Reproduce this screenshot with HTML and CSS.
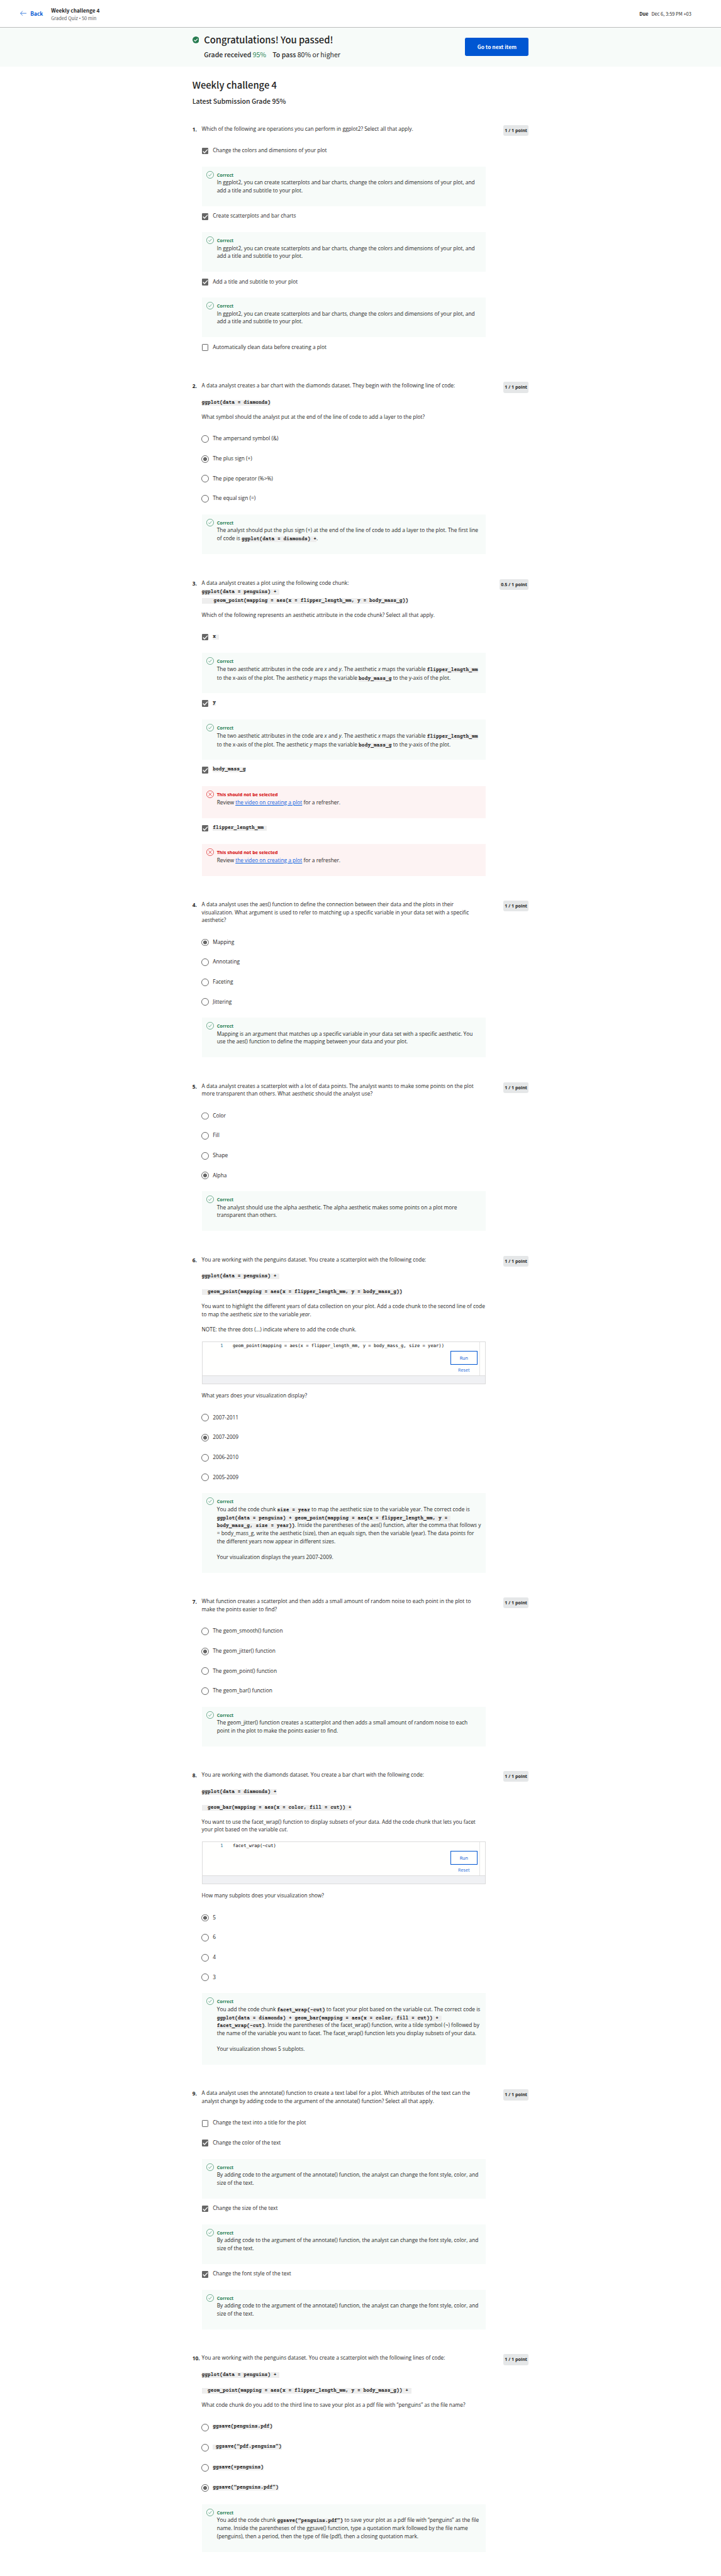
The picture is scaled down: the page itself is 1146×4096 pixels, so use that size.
FILE: index.html
```html
<!DOCTYPE html>
<html lang="en">
<head>
<meta charset="utf-8">
<title>Weekly challenge 4</title>
<link rel="stylesheet" href="styles.css">
</head>
<body>
<svg class="sprite" aria-hidden="true">
  <symbol id="ok" viewBox="0 0 20 20"><circle cx="10" cy="10" r="9.4" fill="none" stroke="currentColor"/><path d="M5.8 10.4l2.7 2.8 5.5-6.6" fill="none" stroke="currentColor"/></symbol>
  <symbol id="bad" viewBox="0 0 20 20"><circle cx="10" cy="10" r="9.4" fill="none" stroke="currentColor"/><path d="M5.8 5.6l8.4 8.8M14.2 5.6l-8.4 8.8" fill="none" stroke="currentColor"/></symbol>
  <symbol id="tick" viewBox="0 0 18 18"><path d="M2.8 9.2l4 4.2 8.4-9" fill="none" stroke="#fff" stroke-width="2.2"/></symbol>
</svg>

<header class="topbar">
  <a class="back"><svg class="arrow" viewBox="0 0 17 14"><path d="M17 7H1M6.5 1L1 7l5.5 6" fill="none" stroke="currentColor" stroke-width="1.2"/></svg>Back</a>
  <div class="crumb"><div class="crumb-title">Weekly challenge 4</div><div class="crumb-sub">Graded Quiz <span class="dot">•</span> 50 min</div></div>
  <div class="due"><b>Due</b><span>Dec 6, 3:59 PM +03</span></div>
</header>

<section class="banner">
  <div class="banner-inner">
    <svg class="passed" viewBox="0 0 18 18"><circle cx="9" cy="9" r="9" fill="#267b50"/><path d="M4.2 9.2l3.2 3.1 6.3-6.2" fill="none" stroke="#fff" stroke-width="2"/></svg>
    <div class="result">
      <h1>Congratulations! You passed!</h1>
      <div class="grades"><span><b>Grade received</b> <span class="green">95%</span></span><span><b>To pass</b> 80% or higher</span></div>
    </div>
    <a class="next">Go to next item</a>
  </div>
</section>

<main>
<h2>Weekly challenge 4</h2>
<h3>Latest Submission Grade 95%</h3>

<section class="q">
  <div class="num">1.</div>
  <div class="body">
    <div class="prompt"><p>Which of the following are operations you can perform in ggplot2? Select all that apply.</p></div>
    <div class="opt"><i class="box on"><svg><use href="#tick"/></svg></i>Change the colors and dimensions of your plot</div>
    <div class="fb"><svg class="ic"><use href="#ok"/></svg><div><b>Correct</b><p>In ggplot2, you can create scatterplots and bar charts, change the colors and dimensions of your plot, and<br>add a title and subtitle to your plot.</p></div></div>
    <div class="opt"><i class="box on"><svg><use href="#tick"/></svg></i>Create scatterplots and bar charts</div>
    <div class="fb"><svg class="ic"><use href="#ok"/></svg><div><b>Correct</b><p>In ggplot2, you can create scatterplots and bar charts, change the colors and dimensions of your plot, and<br>add a title and subtitle to your plot.</p></div></div>
    <div class="opt"><i class="box on"><svg><use href="#tick"/></svg></i>Add a title and subtitle to your plot</div>
    <div class="fb"><svg class="ic"><use href="#ok"/></svg><div><b>Correct</b><p>In ggplot2, you can create scatterplots and bar charts, change the colors and dimensions of your plot, and<br>add a title and subtitle to your plot.</p></div></div>
    <div class="opt"><i class="box"></i>Automatically clean data before creating a plot</div>
  </div>
  <div class="pts">1 / 1 point</div>
</section>

<section class="q">
  <div class="num">2.</div>
  <div class="body">
    <div class="prompt">
      <p>A data analyst creates a bar chart with the diamonds dataset. They begin with the following line of code:</p>
      <p class="cl"><code>ggplot(data = diamonds)</code></p>
      <p>What symbol should the analyst put at the end of the line of code to add a layer to the plot?</p>
    </div>
    <div class="opt"><i class="radio"></i>The ampersand symbol (&amp;)</div>
    <div class="opt"><i class="radio on"></i>The plus sign (+)</div>
    <div class="opt"><i class="radio"></i>The pipe operator (%&gt;%)</div>
    <div class="opt"><i class="radio"></i>The equal sign (=)</div>
    <div class="fb"><svg class="ic"><use href="#ok"/></svg><div><b>Correct</b><p class="mix">The analyst should put the plus sign (+) at the end of the line of code to add a layer to the plot. The first line<br>of code is <code>ggplot(data = diamonds) +</code>.</p></div></div>
  </div>
  <div class="pts">1 / 1 point</div>
</section>

<section class="q">
  <div class="num">3.</div>
  <div class="body">
    <div class="prompt">
      <div>A data analyst creates a plot using the following code chunk:</div>
      <p class="cl"><code>ggplot(data = penguins) + </code><br><code>    geom_point(mapping = aes(x = flipper_length_mm, y = body_mass_g))</code></p>
      <p>Which of the following represents an aesthetic attribute in the code chunk? Select all that apply.</p>
    </div>
    <div class="opt"><i class="box on"><svg><use href="#tick"/></svg></i><code>x </code></div>
    <div class="fb"><svg class="ic"><use href="#ok"/></svg><div><b>Correct</b><p class="cl">The two aesthetic attributes in the code are <em>x</em> and <em>y</em>. The aesthetic <em>x</em> maps the variable <code>flipper_length_mm</code><br>to the x-axis of the plot. The aesthetic <em>y</em> maps the variable <code>body_mass_g</code> to the y-axis of the plot.</p></div></div>
    <div class="opt tall"><i class="box on"><svg><use href="#tick"/></svg></i><code>y</code></div>
    <div class="fb"><svg class="ic"><use href="#ok"/></svg><div><b>Correct</b><p class="cl">The two aesthetic attributes in the code are <em>x</em> and <em>y</em>. The aesthetic <em>x</em> maps the variable <code>flipper_length_mm</code><br>to the x-axis of the plot. The aesthetic <em>y</em> maps the variable <code>body_mass_g</code> to the y-axis of the plot.</p></div></div>
    <div class="opt tall"><i class="box on"><svg><use href="#tick"/></svg></i><code>body_mass_g</code></div>
    <div class="fb red"><svg class="ic"><use href="#bad"/></svg><div><b>This should not be selected</b><p>Review <a>the video on creating a plot</a> for a refresher.</p></div></div>
    <div class="opt tall"><i class="box on"><svg><use href="#tick"/></svg></i><code>flipper_length_mm </code></div>
    <div class="fb red"><svg class="ic"><use href="#bad"/></svg><div><b>This should not be selected</b><p>Review <a>the video on creating a plot</a> for a refresher.</p></div></div>
  </div>
  <div class="pts">0.5 / 1 point</div>
</section>

<section class="q">
  <div class="num">4.</div>
  <div class="body">
    <div class="prompt"><p>A data analyst uses the aes() function to define the connection between their data and the plots in their<br>visualization. What argument is used to refer to matching up a specific variable in your data set with a specific<br>aesthetic?</p></div>
    <div class="opt"><i class="radio on"></i>Mapping</div>
    <div class="opt"><i class="radio"></i>Annotating</div>
    <div class="opt"><i class="radio"></i>Faceting</div>
    <div class="opt"><i class="radio"></i>Jittering</div>
    <div class="fb"><svg class="ic"><use href="#ok"/></svg><div><b>Correct</b><p>Mapping is an argument that matches up a specific variable in your data set with a specific aesthetic. You<br>use the aes() function to define the mapping between your data and your plot.</p></div></div>
  </div>
  <div class="pts">1 / 1 point</div>
</section>

<section class="q">
  <div class="num">5.</div>
  <div class="body">
    <div class="prompt"><p>A data analyst creates a scatterplot with a lot of data points. The analyst wants to make some points on the plot<br>more transparent than others. What aesthetic should the analyst use?</p></div>
    <div class="opt"><i class="radio"></i>Color</div>
    <div class="opt"><i class="radio"></i>Fill</div>
    <div class="opt"><i class="radio"></i>Shape</div>
    <div class="opt"><i class="radio on"></i>Alpha</div>
    <div class="fb"><svg class="ic"><use href="#ok"/></svg><div><b>Correct</b><p>The analyst should use the alpha aesthetic. The alpha aesthetic makes some points on a plot more<br>transparent than others.</p></div></div>
  </div>
  <div class="pts">1 / 1 point</div>
</section>

<section class="q">
  <div class="num">6.</div>
  <div class="body">
    <div class="prompt">
      <p>You are working with the penguins dataset. You create a scatterplot with the following code:</p>
      <p class="cl"><code>ggplot(data = penguins) + </code></p>
      <p class="cl"><code>  geom_point(mapping = aes(x = flipper_length_mm, y = body_mass_g))</code></p>
      <p>You want to highlight the different years of data collection on your plot. Add a code chunk to the second line of code<br>to map the aesthetic <em>size</em> to the variable <em>year</em>.</p>
      <p>NOTE: the three dots (...) indicate where to add the code chunk.</p>
      <div class="editor">
        <div class="pane"><span class="ln">1</span><span class="src">geom_point(mapping = aes(x = flipper_length_mm, y = body_mass_g, size = year))</span><div class="acts"><span class="run">Run</span><span>Reset</span></div><div class="ruler"></div></div>
        <div class="foot"></div>
      </div>
      <p>What years does your visualization display?</p>
    </div>
    <div class="opt"><i class="radio"></i>2007-2011</div>
    <div class="opt"><i class="radio on"></i>2007-2009</div>
    <div class="opt"><i class="radio"></i>2006-2010</div>
    <div class="opt"><i class="radio"></i>2005-2009</div>
    <div class="fb"><svg class="ic"><use href="#ok"/></svg><div><b>Correct</b><p class="mix">You add the code chunk <code>size = year</code> to map the aesthetic size to the variable year. The correct code is<br><code>ggplot(data = penguins) + geom_point(mapping = aes(x = flipper_length_mm, y = </code><br><code>body_mass_g, size = year))</code>. Inside the parentheses of the aes() function, after the comma that follows y<br>= body_mass_g, write the aesthetic (size), then an equals sign, then the variable (year). The data points for<br>the different years now appear in different sizes.</p><p>Your visualization displays the years 2007-2009.</p></div></div>
  </div>
  <div class="pts">1 / 1 point</div>
</section>

<section class="q">
  <div class="num">7.</div>
  <div class="body">
    <div class="prompt"><p>What function creates a scatterplot and then adds a small amount of random noise to each point in the plot to<br>make the points easier to find?</p></div>
    <div class="opt"><i class="radio"></i>The geom_smooth() function</div>
    <div class="opt"><i class="radio on"></i>The geom_jitter() function</div>
    <div class="opt"><i class="radio"></i>The geom_point() function</div>
    <div class="opt"><i class="radio"></i>The geom_bar() function</div>
    <div class="fb"><svg class="ic"><use href="#ok"/></svg><div><b>Correct</b><p>The geom_jitter() function creates a scatterplot and then adds a small amount of random noise to each<br>point in the plot to make the points easier to find.</p></div></div>
  </div>
  <div class="pts">1 / 1 point</div>
</section>

<section class="q">
  <div class="num">8.</div>
  <div class="body">
    <div class="prompt">
      <p>You are working with the diamonds dataset. You create a bar chart with the following code:</p>
      <p class="cl"><code>ggplot(data = diamonds) +</code></p>
      <p class="cl"><code>  geom_bar(mapping = aes(x = color, fill = cut)) +</code></p>
      <p>You want to use the facet_wrap() function to display subsets of your data. Add the code chunk that lets you facet<br>your plot based on the variable <em>cut</em>.</p>
      <div class="editor">
        <div class="pane"><span class="ln">1</span><span class="src">facet_wrap(~cut)</span><div class="acts"><span class="run">Run</span><span>Reset</span></div><div class="ruler"></div></div>
        <div class="foot"></div>
      </div>
      <p>How many subplots does your visualization show?</p>
    </div>
    <div class="opt"><i class="radio on"></i>5</div>
    <div class="opt"><i class="radio"></i>6</div>
    <div class="opt"><i class="radio"></i>4</div>
    <div class="opt"><i class="radio"></i>3</div>
    <div class="fb"><svg class="ic"><use href="#ok"/></svg><div><b>Correct</b><p class="mix">You add the code chunk <code>facet_wrap(~cut)</code> to facet your plot based on the variable cut. The correct code is<br><code>ggplot(data = diamonds) + geom_bar(mapping = aes(x = color, fill = cut)) + </code><br><code>facet_wrap(~cut)</code>. Inside the parentheses of the facet_wrap() function, write a tilde symbol (~) followed by<br>the name of the variable you want to facet. The facet_wrap() function lets you display subsets of your data.</p><p>Your visualization shows 5 subplots.</p></div></div>
  </div>
  <div class="pts">1 / 1 point</div>
</section>

<section class="q">
  <div class="num">9.</div>
  <div class="body">
    <div class="prompt"><p>A data analyst uses the annotate() function to create a text label for a plot. Which attributes of the text can the<br>analyst change by adding code to the argument of the annotate() function? Select all that apply.</p></div>
    <div class="opt"><i class="box"></i>Change the text into a title for the plot</div>
    <div class="opt"><i class="box on"><svg><use href="#tick"/></svg></i>Change the color of the text</div>
    <div class="fb"><svg class="ic"><use href="#ok"/></svg><div><b>Correct</b><p>By adding code to the argument of the annotate() function, the analyst can change the font style, color, and<br>size of the text.</p></div></div>
    <div class="opt"><i class="box on"><svg><use href="#tick"/></svg></i>Change the size of the text</div>
    <div class="fb"><svg class="ic"><use href="#ok"/></svg><div><b>Correct</b><p>By adding code to the argument of the annotate() function, the analyst can change the font style, color, and<br>size of the text.</p></div></div>
    <div class="opt"><i class="box on"><svg><use href="#tick"/></svg></i>Change the font style of the text</div>
    <div class="fb"><svg class="ic"><use href="#ok"/></svg><div><b>Correct</b><p>By adding code to the argument of the annotate() function, the analyst can change the font style, color, and<br>size of the text.</p></div></div>
  </div>
  <div class="pts">1 / 1 point</div>
</section>

<section class="q">
  <div class="num">10.</div>
  <div class="body">
    <div class="prompt">
      <p>You are working with the penguins dataset. You create a scatterplot with the following lines of code:</p>
      <p class="cl"><code>ggplot(data = penguins) + </code></p>
      <p class="cl"><code>  geom_point(mapping = aes(x = flipper_length_mm, y = body_mass_g)) + </code></p>
      <p>What code chunk do you add to the third line to save your plot as a pdf file with “penguins” as the file name?</p>
    </div>
    <div class="opt tall"><i class="radio"></i><code>ggsave(penguins.pdf)</code></div>
    <div class="opt tall"><i class="radio"></i><code> ggsave(“pdf.penguins”)</code></div>
    <div class="opt tall"><i class="radio"></i><code>ggsave(=penguins)</code></div>
    <div class="opt tall"><i class="radio on"></i><code>ggsave(“penguins.pdf”)</code></div>
    <div class="fb"><svg class="ic"><use href="#ok"/></svg><div><b>Correct</b><p class="mix">You add the code chunk <code>ggsave(“penguins.pdf”)</code> to save your plot as a pdf file with “penguins” as the file<br>name. Inside the parentheses of the ggsave() function, type a quotation mark followed by the file name<br>(penguins), then a period, then the type of file (pdf), then a closing quotation mark.</p></div></div>
  </div>
  <div class="pts">1 / 1 point</div>
</section>
</main>
</body>
</html>
```

FILE: styles.css
```css
/* 1rem is ten design units on a 1920-unit wide canvas */
html { font-size: 5.967px; }
* { box-sizing: border-box; margin: 0; padding: 0; }
body {
  height: 686.4rem;
  background: #fff;
  color: #1f1f1f;
  font: 1.4rem/2.1rem "Open Sans", "Noto Sans", sans-serif;
  white-space: nowrap;
  overflow: hidden;
}
.sprite { display: none; }
svg { display: block; }

.topbar, .banner, h2, h3 { font-family: "Noto Sans CJK SC", "Open Sans", sans-serif; }

.topbar {
  display: flex;
  align-items: center;
  height: 7.3rem;
  padding: 0 7.9rem 0 5.4rem;
  border-bottom: 1px solid #bbbcbc;
}
.back {
  display: flex;
  align-items: center;
  gap: 1rem;
  width: 8.2rem;
  color: #0056d2;
  font-size: 1.4rem;
  font-weight: 700;
}
.arrow { width: 1.7rem; height: 1.4rem; }
.crumb { flex: 1; padding-top: .4rem; }
.crumb-title { font-size: 1.38rem; font-weight: 700; line-height: 2.2rem; }
.crumb-sub { font-size: 1.25rem; line-height: 2.1rem; color: #636363; }
.dot { font-family: "Open Sans", sans-serif; }
.due { display: flex; gap: .8rem; font-size: 1.25rem; padding-top: .3rem; }

.banner { height: 10.4rem; background: #f7fbf9; }
.banner-inner {
  display: flex;
  width: 89.6rem;
  margin: 0 auto;
  padding-top: 2.5rem;
}
.passed { width: 1.8rem; height: 1.8rem; margin-right: 1.3rem; }
.result { flex: 1; }
h1, h2 { font-size: 2.48rem; font-weight: 500; line-height: 3rem; }
h1 { margin-top: -.7rem; }
.grades { display: flex; gap: 1.7rem; margin-top: 1.3rem; font-size: 1.77rem; line-height: 2.4rem; }
.grades b { font-weight: 500; }
.green { color: #2a8557; }
.next {
  width: 16.9rem;
  height: 4.8rem;
  margin-top: .3rem;
  border-radius: .4rem;
  background: #0056d2;
  color: #fff;
  font-size: 1.4rem;
  font-weight: 700;
  line-height: 4.8rem;
  text-align: center;
}

main { width: 89.6rem; margin: 0 auto; }
h2 { padding-top: 3.4rem; height: 7.9rem; }
h3 { height: 7.7rem; padding-top: .25rem; font-size: 1.77rem; font-weight: 500; line-height: 2.4rem; }

.q { display: flex; align-items: flex-start; padding-bottom: 5rem; }
.num { width: 2.5rem; padding-top: .15rem; font-weight: 700; }
.body { width: 75.6rem; }
.pts {
  margin-left: auto;
  padding: 0 .4rem;
  border-radius: .4rem;
  background: #e5e7e8;
  font-size: 1.2rem;
  font-weight: 700;
  line-height: 2.9rem;
}
.prompt { padding-bottom: 3.7rem; }
p + p { margin-top: 2rem; }
.cl { line-height: 2.21rem; }
.mix { line-height: 2.15rem; }
code {
  background: #eee;
  font: 700 1.333rem/1 "Courier Prime", "Liberation Mono", monospace;
  white-space: pre;
}

.opt { display: flex; align-items: center; height: 5.3rem; padding-bottom: 3.2rem; }
.opt.tall { height: 5.4rem; }
.box, .radio { flex: none; position: relative; top: .08rem; }
.box { width: 1.8rem; height: 1.8rem; margin-right: 1.15rem; border: 1px solid #666; border-radius: .2rem; }
.box.on { border: 0; background: #666; }
.box svg { width: 100%; height: 100%; }
.radio {
  width: 2rem;
  height: 2rem;
  margin: 0 1.05rem 0 -.1rem;
  border: .2rem solid #666;
  border-radius: 50%;
}
.radio.on { background: radial-gradient(circle, #666 0 .45rem, transparent .55rem); }

.fb { display: flex; padding: 1.2rem 0 3.1rem 1.2rem; margin-bottom: 1.6rem; background: #f7fbf9; }
.ic { width: 2rem; height: 2rem; margin-right: .85rem; color: #1d7c50; }
.fb b { display: block; color: #1d7c50; font-size: 1.2rem; line-height: 2.06rem; }
.fb.red { background: #fdf3f3; }
.fb.red .ic, .fb.red b { color: #d30001; }
.fb a { color: #0f62e0; text-decoration: underline; }

.editor { margin: 2rem 0; height: 11.47rem; display: flex; flex-direction: column; border: 1px solid #dcdcdc; }
.pane { flex: 1; display: flex; background: #fffffe; }
.ln, .src { font: 1.2rem/1.9rem "DejaVu Sans Mono", monospace; color: #000; }
.ln { width: 8.1rem; padding-left: 4.8rem; color: #237893; }
.acts { margin-left: auto; width: 7.2rem; padding-top: 2.4rem; text-align: center; font-size: 1.2rem; line-height: 3rem; color: #2a6fdb; }
.acts span { display: block; }
.acts .run { border: 1px solid #0056d2; line-height: 3.4rem; height: 3.6rem; color: #0056d2; }
.ruler { width: 1.5rem; margin-left: .5rem; border-left: 1px solid #e4e4e4; }
.foot { height: 2.2rem; border-top: 1px solid #dcdcdc; background: #f0f1f4; }
```
